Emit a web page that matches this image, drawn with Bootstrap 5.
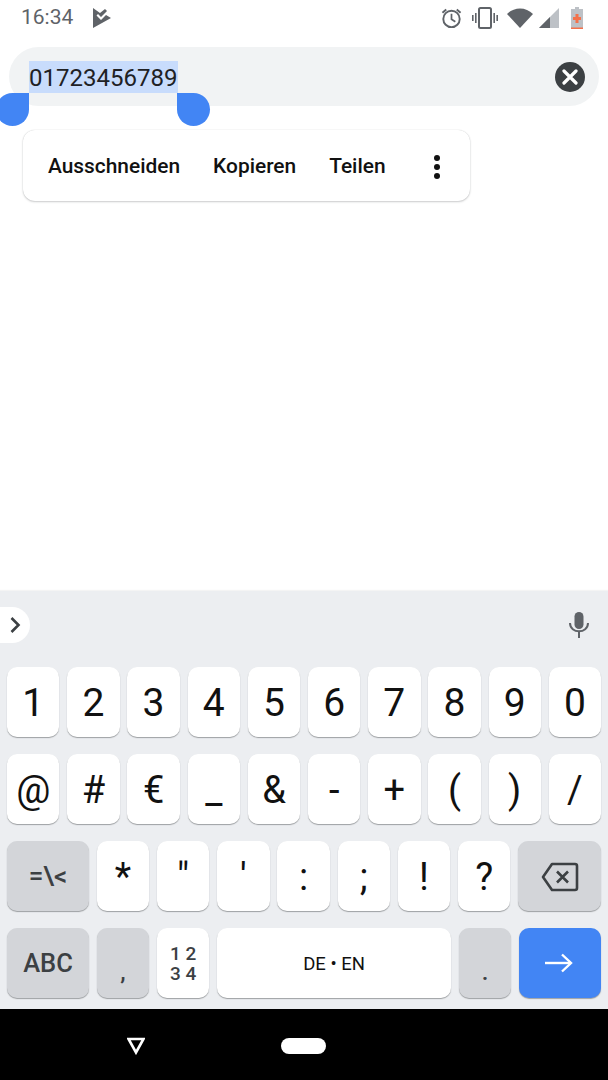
<!DOCTYPE html>
<html lang="de">
<head>
    <meta charset="UTF-8">
    <title>Suche</title>
    <link href="https://cdn.jsdelivr.net/npm/bootstrap@5.3.3/dist/css/bootstrap.min.css" rel="stylesheet">
    <style>
        html, body { height: 1080px; overflow: hidden; }
        body { font-family: Roboto, "Liberation Sans", sans-serif; background: #fff; }
        .phone { width: 608px; height: 1080px; }

        .status-bar { height: 47px; padding: 0 25px 11px 21px; color: #5f6368; font-size: 21px; }
        .status-bar svg { display: block; }
        .status-left { gap: 20px; }
        .alarm-icon { margin-right: 10px; }
        .vibrate-icon { margin-right: 9px; }
        .wifi-icon { margin-right: 6px; }
        .signal-icon { margin-right: 12px; }

        .search-wrap { padding: 0 9px; position: relative; }
        .search-pill { height: 59px; background: #f1f3f4; border-radius: 30px; padding: 0 14px 0 20px; }
        .selected-text { background: #c8dcfc; color: #202124; font-size: 24px; line-height: 35px; height: 32px; width: 149px; }
        .clear-btn { width: 30px; height: 30px; background: #3c4043; border-radius: 50%; }

        .handle { position: absolute; top: 46px; width: 33px; height: 33px; background: #4285f4; }
        .handle-left { left: -4px; border-radius: 50% 0 50% 50%; }
        .handle-right { left: 177px; border-radius: 0 50% 50% 50%; }

        .text-menu { position: absolute; left: 23px; top: 130px; width: 447px; height: 71px; background: #fff; border-radius: 12px; box-shadow: 0 1px 2px rgba(60,64,67,.25), 0 0 1px rgba(60,64,67,.25); padding: 2px 0 0 25px; font-size: 20.9px; font-weight: 500; color: #111; }
        .text-menu span { white-space: nowrap; }
        .menu-copy { margin-left: 33px; }
        .menu-share { margin-left: 33px; }
        .menu-more { margin-left: 46px; width: 10px; gap: 3px; }
        .menu-more i { display: block; width: 6px; height: 6px; border-radius: 50%; background: #111; }

        .keyboard { height: 418px; background: #eceef1; box-shadow: 0 -1px 1px rgba(60,64,67,.06); }
        .suggest-strip { height: 76px; padding: 16px 19px 0 0; }
        .expand-tab { width: 29.5px; height: 36px; background: #fff; border-radius: 0 18px 18px 0; }
        .mic-icon { margin-top: 4px; }
        .key-rows { padding: 0 7px; gap: 17px; }
        .key-row { gap: 7.8px; height: 70px; }
        .kb-key { flex: 0 0 52.4px; background: #fff; border-radius: 10px; box-shadow: 0 1px 1px rgba(60,64,67,.45); color: #111; font-size: 39px; line-height: 1; padding-top: 2px; }
        .kb-wide { flex: 1 1 0; }
        .kb-gray { background: #d3d5d9; color: #3c4043; }
        .kb-side { flex: 0 0 82px; padding-top: 0; }
        .kb-sym { font-size: 38px; }
        .kb-mid { font-size: 26px; font-weight: 500; }
        .kb-abc { font-size: 25.5px; font-weight: 500; padding-top: 2px; }
        .kb-numpad { font-size: 19px; font-weight: 500; color: #3c4043; line-height: 20px; text-align: center; }
        .kb-lang { font-size: 18.5px; }
        .kb-blue { background: #4285f4; }
        .kb-low { padding-top: 18px; font-size: 24px; font-weight: 500; }
        .kb-arrow { margin-left: -2px; }

        .nav-strip { height: 71px; background: #000; padding: 2px 0 0 127px; }
        .home-pill { width: 45px; height: 16px; background: #fff; border-radius: 8px; margin-left: 136px; }
    </style>
</head>
<body>

<div class="phone d-flex flex-column position-relative">

    <div class="status-bar d-flex align-items-center justify-content-between">
        <div class="status-left d-flex align-items-center">
            <span>16:34</span>
            <svg width="19" height="20" viewBox="0 0 19 20"><path d="M0 0 L7 5 L12 1 L14 3 L8 9 L5 6 L3.5 7.5 L8 12 L13 7 L18 10 L0 20 Z" fill="#5f6368"/></svg>
        </div>
        <div class="d-flex align-items-center">
            <svg class="alarm-icon" width="21" height="22" viewBox="0 0 22 22" fill="none" stroke="#5f6368"><circle cx="11" cy="12" r="8.6" stroke-width="2"/><path d="M11 6.5 V12.3 L15 15" stroke-width="1.8"/><path d="M1.5 5.5 L5.5 2 M20.5 5.5 L16.5 2" stroke-width="2"/></svg>
            <svg class="vibrate-icon" width="26" height="22" viewBox="0 0 26 22" fill="none" stroke="#5f6368"><rect x="7" y="1" width="12" height="20" rx="1.5" stroke-width="2"/><path d="M3.8 6 V16 M22.2 6 V16" stroke-width="1.6"/><path d="M0.8 8 V14 M25.2 8 V14" stroke-width="1.6"/></svg>
            <svg class="wifi-icon" width="26" height="20" viewBox="0 0 26 20"><path d="M0 6 C7 -1.5 19 -1.5 26 6 L13 20 Z" fill="#5f6368"/></svg>
            <svg class="signal-icon" width="20" height="20" viewBox="0 0 20 20"><path d="M0 20 L20 0 V20 Z" fill="#bdc1c6"/><path d="M0 20 L11 9 V20 Z" fill="#5f6368"/></svg>
            <svg width="12" height="22" viewBox="0 0 12 22"><path d="M4 0 H8 V2 H12 V22 H0 V2 H4 Z" fill="#bdc1c6"/><rect x="0" y="20.5" width="12" height="1.5" fill="#f4714a"/><path d="M4.5 7 H7.5 V10 H10 V13 H7.5 V16 H4.5 V13 H2 V10 H4.5 Z" fill="#f4714a"/></svg>
        </div>
    </div>

    <div class="search-wrap">
        <div class="search-pill d-flex align-items-center justify-content-between">
            <div class="selected-text">01723456789</div>
            <div class="clear-btn d-flex align-items-center justify-content-center">
                <svg width="16" height="16" viewBox="0 0 16 16"><path d="M2 2 L14 14 M14 2 L2 14" stroke="#fff" stroke-width="3.2" stroke-linecap="round"/></svg>
            </div>
        </div>
        <div class="handle handle-left"></div>
        <div class="handle handle-right"></div>
    </div>

    <div class="text-menu d-flex align-items-center">
        <span>Ausschneiden</span>
        <span class="menu-copy">Kopieren</span>
        <span class="menu-share">Teilen</span>
        <div class="menu-more d-flex flex-column align-items-center"><i></i><i></i><i></i></div>
    </div>

    <div class="flex-grow-1"></div>

    <div class="keyboard">
        <div class="suggest-strip d-flex justify-content-between align-items-start">
            <div class="expand-tab d-flex align-items-center justify-content-center">
                <svg width="12" height="18" viewBox="0 0 12 18" fill="none"><path d="M2.5 2 L9.5 9 L2.5 16" stroke="#3c4043" stroke-width="2.6"/></svg>
            </div>
            <svg class="mic-icon" width="20" height="27" viewBox="0 0 20 27"><rect x="5.5" y="1" width="9" height="17" rx="4.5" fill="#5f6368"/><path d="M1 12 C1 23 19 23 19 12" fill="none" stroke="#5f6368" stroke-width="2"/><rect x="9" y="20" width="2" height="7" fill="#5f6368"/></svg>
        </div>

        <div class="key-rows d-flex flex-column">
            <div class="key-row d-flex">
                <div class="kb-key d-flex align-items-center justify-content-center">1</div>
                <div class="kb-key d-flex align-items-center justify-content-center">2</div>
                <div class="kb-key d-flex align-items-center justify-content-center">3</div>
                <div class="kb-key d-flex align-items-center justify-content-center">4</div>
                <div class="kb-key d-flex align-items-center justify-content-center">5</div>
                <div class="kb-key d-flex align-items-center justify-content-center">6</div>
                <div class="kb-key d-flex align-items-center justify-content-center">7</div>
                <div class="kb-key d-flex align-items-center justify-content-center">8</div>
                <div class="kb-key d-flex align-items-center justify-content-center">9</div>
                <div class="kb-key d-flex align-items-center justify-content-center">0</div>
            </div>
            <div class="key-row d-flex">
                <div class="kb-key kb-sym d-flex align-items-center justify-content-center">@</div>
                <div class="kb-key kb-sym d-flex align-items-center justify-content-center">#</div>
                <div class="kb-key kb-sym d-flex align-items-center justify-content-center">€</div>
                <div class="kb-key kb-sym d-flex align-items-center justify-content-center">_</div>
                <div class="kb-key kb-sym d-flex align-items-center justify-content-center">&amp;</div>
                <div class="kb-key kb-sym d-flex align-items-center justify-content-center">-</div>
                <div class="kb-key kb-sym d-flex align-items-center justify-content-center">+</div>
                <div class="kb-key kb-sym d-flex align-items-center justify-content-center">(</div>
                <div class="kb-key kb-sym d-flex align-items-center justify-content-center">)</div>
                <div class="kb-key kb-sym d-flex align-items-center justify-content-center">/</div>
            </div>
            <div class="key-row d-flex">
                <div class="kb-key kb-side kb-gray kb-mid d-flex align-items-center justify-content-center">=\&lt;</div>
                <div class="kb-key kb-sym d-flex align-items-center justify-content-center">*</div>
                <div class="kb-key kb-sym d-flex align-items-center justify-content-center">"</div>
                <div class="kb-key kb-sym d-flex align-items-center justify-content-center">'</div>
                <div class="kb-key kb-sym d-flex align-items-center justify-content-center">:</div>
                <div class="kb-key kb-sym d-flex align-items-center justify-content-center">;</div>
                <div class="kb-key kb-sym d-flex align-items-center justify-content-center">!</div>
                <div class="kb-key kb-sym d-flex align-items-center justify-content-center">?</div>
                <div class="kb-key kb-wide kb-gray d-flex align-items-center justify-content-center">
                    <svg width="38" height="30" viewBox="0 0 38 30" fill="none" stroke="#3c4043"><path d="M11 2 H34 Q36 2 36 4 V26 Q36 28 34 28 H11 L2 15 Z" stroke-width="2.6" stroke-linejoin="round"/><path d="M16 9.5 L27 20.5 M27 9.5 L16 20.5" stroke-width="2.6"/></svg>
                </div>
            </div>
            <div class="key-row d-flex">
                <div class="kb-key kb-side kb-gray kb-abc d-flex align-items-center justify-content-center">ABC</div>
                <div class="kb-key kb-gray kb-low d-flex align-items-center justify-content-center">,</div>
                <div class="kb-key kb-numpad d-flex align-items-center justify-content-center"><div>1 2<br>3 4</div></div>
                <div class="kb-key kb-wide kb-lang d-flex align-items-center justify-content-center">DE • EN</div>
                <div class="kb-key kb-gray kb-low d-flex align-items-center justify-content-center">.</div>
                <div class="kb-key kb-side kb-blue d-flex align-items-center justify-content-center">
                    <svg class="kb-arrow" width="30" height="20" viewBox="0 0 30 20" fill="none" stroke="#fff" stroke-width="2.4"><path d="M1 10 H27"/><path d="M18 1.5 L27 10 L18 18.5"/></svg>
                </div>
            </div>
        </div>
    </div>

    <div class="nav-strip d-flex align-items-center">
        <svg width="18" height="18" viewBox="0 0 18 18" fill="none"><path d="M1.5 2 H16.5 L9 15.5 Z" stroke="#fff" stroke-width="2.6"/></svg>
        <div class="home-pill"></div>
    </div>
</div>

<script src="https://cdn.jsdelivr.net/npm/bootstrap@5.3.3/dist/js/bootstrap.bundle.min.js"></script>
</body>
</html>
